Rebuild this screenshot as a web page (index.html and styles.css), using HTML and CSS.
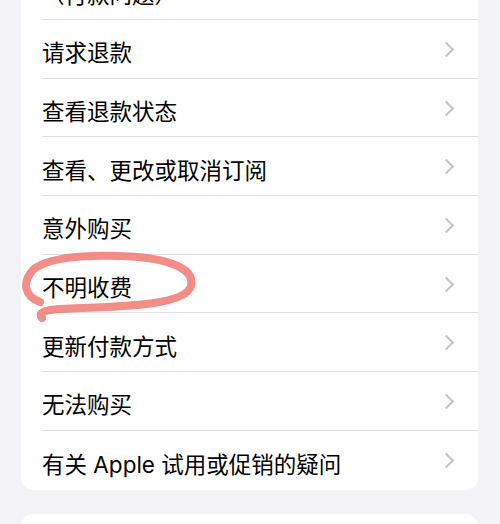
FILE: index.html
```html
<!DOCTYPE html>
<html lang="zh-CN">
<head>
  <meta charset="UTF-8">
  <title>报告问题</title>
  <link rel="stylesheet" href="styles.css">
</head>
<body>

<div class="page">
  <div class="card card-top">
    <div class="row"><div class="row-inner"><span class="label">（付款问题）</span><span class="chev"></span></div></div>
    <div class="row"><div class="row-inner"><span class="label">请求退款</span><span class="chev"></span></div></div>
    <div class="row"><div class="row-inner"><span class="label">查看退款状态</span><span class="chev"></span></div></div>
    <div class="row"><div class="row-inner"><span class="label">查看、更改或取消订阅</span><span class="chev"></span></div></div>
    <div class="row"><div class="row-inner"><span class="label">意外购买</span><span class="chev"></span></div></div>
    <div class="row"><div class="row-inner"><span class="label">不明收费</span><span class="chev"></span></div></div>
    <div class="row"><div class="row-inner"><span class="label">更新付款方式</span><span class="chev"></span></div></div>
    <div class="row"><div class="row-inner"><span class="label">无法购买</span><span class="chev"></span></div></div>
    <div class="row last"><div class="row-inner"><span class="label">有关 Apple 试用或促销的疑问</span><span class="chev"></span></div></div>
  </div>

  <div class="card card-next"></div>
</div>

<!-- hand-drawn circle around 不明收费 -->
<svg class="scribble" width="500" height="524" viewBox="0 0 500 524">
  <path d="M42 318 C 36 310, 52 309, 82 308 C 132 306, 186 304, 191 286 C 196 266, 160 257, 120 256 C 80 255, 46 258, 33 270 C 22 282, 24 296, 40 302"
        fill="none" stroke="#ee6d65" stroke-opacity="0.78" stroke-width="8" stroke-linecap="round" stroke-linejoin="round"/>
</svg>

</body>
</html>
```

FILE: styles.css
```css
body {
  margin: 0;
  background: #f2f2f7;
  font-family: "Inter", "Noto Sans CJK SC", sans-serif;
  position: relative;
  overflow: hidden;
  height: 524px;
}

.page {
  padding: 0 22px 0 21px;
}

.card {
  background: #fff;
  border-radius: 12px;
}

.card-top {
  margin-top: -38.7px;
}

.card-next {
  margin-top: 24px;
  height: 60px;
}

.row {
  padding-left: 21px;
}

.row-inner {
  box-sizing: border-box;
  height: 58.7px;
  padding-top: 5px;
  display: flex;
  align-items: center;
  justify-content: space-between;
  padding-right: 24px;
  border-bottom: 1px solid #e1e1e4;
}

.row.last .row-inner {
  border-bottom: none;
}

.label {
  font-size: 22.5px;
  color: #000;
}

.chev {
  width: 9px;
  height: 9px;
  border-right: 2.4px solid #c4c4c8;
  border-top: 2.4px solid #c4c4c8;
  transform: rotate(45deg);
  margin-right: 2px;
  margin-top: -4px;
}

.scribble {
  position: absolute;
  left: 0;
  top: 0;
  pointer-events: none;
}
```
